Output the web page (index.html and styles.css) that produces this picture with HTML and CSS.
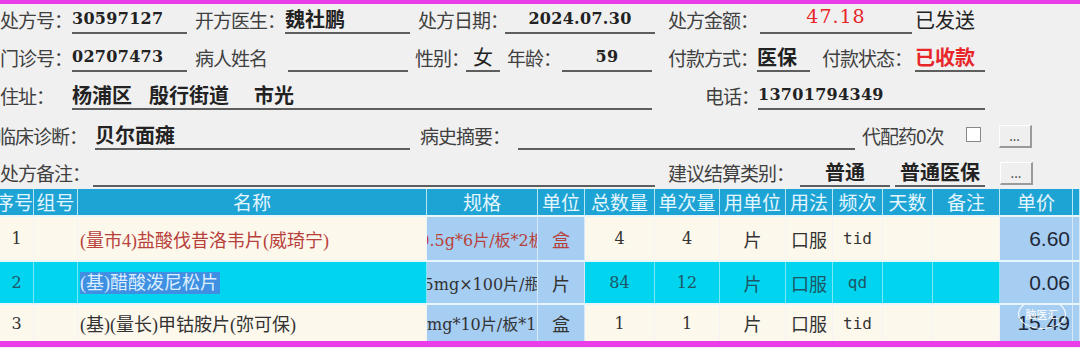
FILE: index.html
```html
<!DOCTYPE html>
<html lang="zh-CN">
<head>
  <meta charset="UTF-8">
  <title>处方</title>
  <link rel="stylesheet" href="styles.css">
</head>
<body>
  <div class="topbar"></div>

  <div class="form">
    <div class="row r1">
      <span class="lbl w-rxno">处方号：</span><span class="fld w-rxval num">30597127</span>
      <span class="lbl w-doc">开方医生：</span><span class="fld w-docval">魏社鹏</span>
      <span class="lbl w-date">处方日期：</span><span class="fld w-dateval c num">2024.07.30</span>
      <span class="lbl w-amt">处方金额：</span><span class="fld w-amtval c red amount">47.18</span>
      <span class="status">已发送</span>
    </div>

    <div class="row r2">
      <span class="lbl w-rxno">门诊号：</span><span class="fld w-rxval num">02707473</span>
      <span class="lbl w-pname">病人姓名</span><span class="fld w-pnameval"></span>
      <span class="lbl w-sex">性别：</span><span class="fld w-sexval c">女</span>
      <span class="lbl w-age">年龄：</span><span class="fld w-ageval c num">59</span>
      <span class="lbl w-pay">付款方式：</span><span class="fld w-payval">医保</span>
      <span class="lbl w-pst">付款状态：</span><span class="fld w-pstval red">已收款</span>
    </div>

    <div class="row r3">
      <span class="lbl w-rxno">住址：</span><span class="fld w-addr"><span>杨浦区</span><span class="gap1">殷行街道</span><span class="gap2">市光</span></span>
      <span class="lbl w-tel">电话：</span><span class="fld w-telval num">13701794349</span>
    </div>

    <div class="row r4">
      <span class="lbl w-diag">临床诊断：</span><span class="fld w-diagval">贝尔面瘫</span>
      <span class="lbl w-hist">病史摘要：</span><span class="fld w-histval"></span>
      <span class="lbl w-proxy">代配药0次</span>
      <span class="check"></span>
      <span class="more">...</span>
    </div>

    <div class="row r5">
      <span class="lbl w-note">处方备注：</span><span class="fld w-noteval"></span>
      <span class="lbl w-settle">建议结算类别：</span><span class="fld w-set1 c">普通</span><span class="fld w-set2 c">普通医保</span>
      <span class="more more2">...</span>
    </div>
  </div>

  <div class="grid">
    <div class="th th-first">序号</div>
    <div class="th">组号</div>
    <div class="th">名称</div>
    <div class="th">规格</div>
    <div class="th">单位</div>
    <div class="th">总数量</div>
    <div class="th">单次量</div>
    <div class="th">用单位</div>
    <div class="th">用法</div>
    <div class="th">频次</div>
    <div class="th">天数</div>
    <div class="th">备注</div>
    <div class="th">单价</div>
    <div class="th"></div>

    <div class="td row-a n">1</div>
    <div class="td row-a"></div>
    <div class="td row-a name drug">(量市4)盐酸伐昔洛韦片(威琦宁)</div>
    <div class="td blue spec drug">0.5g*6片/板*2板</div>
    <div class="td blue drug">盒</div>
    <div class="td row-a n">4</div>
    <div class="td row-a n">4</div>
    <div class="td row-a">片</div>
    <div class="td row-a">口服</div>
    <div class="td row-a mono">tid</div>
    <div class="td row-a"></div>
    <div class="td row-a"></div>
    <div class="td blue price">6.60</div>
    <div class="td blue"></div>

    <div class="td row-b n">2</div>
    <div class="td row-b"></div>
    <div class="td row-b name"><span class="sel">(基)醋酸泼尼松片</span></div>
    <div class="td blue spec">5mg×100片/瓶</div>
    <div class="td blue">片</div>
    <div class="td row-b n">84</div>
    <div class="td row-b n">12</div>
    <div class="td row-b">片</div>
    <div class="td row-b">口服</div>
    <div class="td row-b mono">qd</div>
    <div class="td row-b"></div>
    <div class="td row-b"></div>
    <div class="td blue price">0.06</div>
    <div class="td blue"></div>

    <div class="td row-a n">3</div>
    <div class="td row-a"></div>
    <div class="td row-a name">(基)(量长)甲钴胺片(弥可保)</div>
    <div class="td blue spec">0.5mg*10片/板*10板</div>
    <div class="td blue">盒</div>
    <div class="td row-a n">1</div>
    <div class="td row-a n">1</div>
    <div class="td row-a">片</div>
    <div class="td row-a">口服</div>
    <div class="td row-a mono">tid</div>
    <div class="td row-a"></div>
    <div class="td row-a"></div>
    <div class="td blue price mark-cell">15.49<span class="mark">脑医汇</span></div>
    <div class="td blue"></div>
  </div>

  <div class="bottombar"></div>
</body>
</html>
```

FILE: styles.css
```css
body {
  margin: 0;
  width: 1080px;
  height: 348px;
  overflow: hidden;
  background: #f0f0f0;
  font-family: "Noto Sans CJK SC", sans-serif;
  color: #3a3a3a;
}

.topbar {
  height: 4px;
  background: #ea3ce8;
}

.form {
  overflow: hidden;
}

.row {
  display: flex;
  align-items: flex-end;
  white-space: nowrap;
}

.r1 { height: 30px; }
.r2 { height: 38px; }
.r3 { height: 38px; }
.r4 { height: 40px; }
.r5 { height: 37px; }

.lbl {
  flex: none;
  height: 28px;
  line-height: 28px;
  font-size: 19px;
  color: #404040;
  letter-spacing: -1px;
}

.fld {
  flex: none;
  height: 26px;
  line-height: 26px;
  border-bottom: 2px solid #5e5e5e;
  font-size: 20px;
  font-weight: bold;
  color: #222;
}

.fld.c { text-align: center; }

.num {
  font-family: "DejaVu Serif", serif;
  font-size: 16px;
  letter-spacing: 0.3px;
}

.red { color: #e8262a; }

.amount {
  font-family: "DejaVu Serif", serif;
  font-size: 19px;
  font-weight: normal;
  letter-spacing: 1px;
  line-height: 20px;
}

.status {
  margin-left: 3px;
  height: 28px;
  line-height: 28px;
  font-size: 20px;
  color: #222;
}

/* row 1 */
.w-rxno { width: 72px; }
.w-rxval { width: 115px; }
.w-doc { width: 90px; margin-left: 8px; }
.w-docval { width: 125px; }
.w-date { width: 87px; margin-left: 8px; }
.w-dateval { width: 150px; }
.w-amt { width: 92px; margin-left: 13px; }
.w-amtval { width: 152px; }

/* row 2 */
.w-pname { width: 93px; margin-left: 8px; }
.w-pnameval { width: 120px; }
.w-sex { width: 51px; margin-left: 7px; }
.w-sexval { width: 34px; font-weight: normal; color: #222; }
.w-age { width: 55px; margin-left: 7px; }
.w-ageval { width: 90px; }
.w-pay { width: 89px; margin-left: 16px; }
.w-payval { width: 53px; }
.w-pst { width: 93px; margin-left: 12px; }
.w-pstval { width: 70px; color: #e8262a; }

/* row 3 */
.w-addr { width: 580px; }
.gap1 { margin-left: 17px; }
.gap2 { margin-left: 25px; }
.w-tel { width: 53px; margin-left: 53px; }
.w-telval { width: 227px; }

/* row 4 */
.w-diag { width: 98px; margin-left: -3px; }
.w-diagval { width: 315px; }
.w-hist { width: 98px; margin-left: 10px; }
.w-histval { width: 337px; }
.w-proxy { margin-left: 7px; }

.check {
  flex: none;
  width: 13px;
  height: 13px;
  margin: 0 0 8px 22px;
  background: #fff;
  border: 1px solid #888;
}

.more {
  flex: none;
  width: 30px;
  height: 20px;
  margin: 0 0 2px 18px;
  background: #efefef;
  border-right: 2px solid #9a9a9a;
  border-bottom: 2px solid #9a9a9a;
  border-top: 1px solid #fff;
  border-left: 1px solid #fff;
  font-size: 13px;
  line-height: 20px;
  text-align: center;
  color: #333;
}

/* row 5 */
.w-note { width: 93px; }
.w-noteval { width: 562px; }
.w-settle { width: 132px; margin-left: 13px; }
.w-set1 { width: 90px; }
.w-set2 { width: 90px; margin-left: 5px; }
.more2 { margin-left: 15px; }

/* drug table */
.grid {
  display: grid;
  grid-template-columns: 34px 44px 349px 111px 47px 70px 65px 66px 47px 50px 50px 67px 73px 7px;
  grid-template-rows: 26px 43px 41px 36px;
  row-gap: 2px;
  margin-top: 2px;
  background: #e9f6f9;
}

.th {
  background: #1ea4d4;
  color: #e4f6ff;
  font-size: 19px;
  line-height: 26px;
  text-align: center;
  border-right: 1px solid #b8e6f6;
  white-space: nowrap;
  overflow: hidden;
}

.th-first {
  text-align: right;
  direction: rtl;
}

.td {
  display: flex;
  align-items: center;
  justify-content: center;
  font-family: "Liberation Serif", "Noto Sans CJK SC", serif;
  font-size: 18px;
  color: #333;
  border-right: 1px solid #f4f4f4;
  white-space: nowrap;
  overflow: hidden;
  position: relative;
}

.row-a { background: #fdf8ec; }
.row-b { background: #00d4ee; color: #1e5666; border-right-color: #7fe6f5; }
.blue { background: #a6cdf2; border-right-color: #d6e8fa; }

.n { font-family: "DejaVu Serif", serif; font-size: 16px; }
.mono { font-family: "DejaVu Sans Mono", monospace; font-size: 16px; }

.name {
  justify-content: flex-start;
  padding-left: 2px;
}

.drug { color: #b8413c; }

.sel {
  background: #3f8fe2;
  color: #dceeff;
  line-height: 22px;
  padding-right: 2px;
}

.spec {
  font-family: "DejaVu Serif", "Noto Sans CJK SC", serif;
  font-size: 16px;
}

.price {
  justify-content: flex-end;
  padding-right: 2px;
  font-family: "Liberation Sans", sans-serif;
  font-size: 21px;
  color: #1f2838;
}

.mark {
  position: absolute;
  left: 18px;
  top: -6px;
  width: 46px;
  height: 28px;
  border: 1.5px solid #fff;
  border-radius: 50%;
  font-family: "Noto Sans CJK SC", sans-serif;
  font-size: 11px;
  line-height: 28px;
  text-align: center;
  color: #fff;
}

.bottombar {
  height: 6px;
  background: #ea3ce8;
}
```
